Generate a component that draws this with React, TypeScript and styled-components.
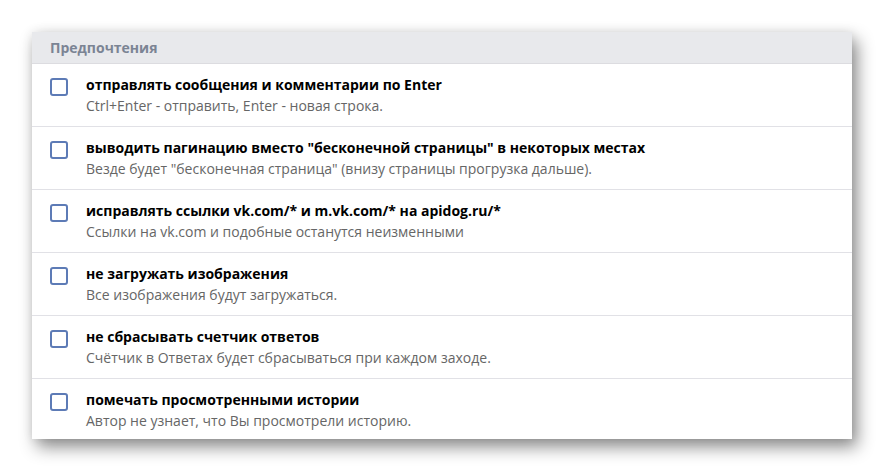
import React from "react";
import styled, { createGlobalStyle } from "styled-components";

const GlobalStyle = createGlobalStyle`
  html, body {
    margin: 0;
    padding: 0;
    background: #ffffff;
  }
  body {
    font-family: "Open Sans", "Noto Sans", sans-serif;
  }
`;

interface IOption {
  title: string;
  hint: string;
}

const options: IOption[] = [
  {
    title: "отправлять сообщения и комментарии по Enter",
    hint: "Ctrl+Enter - отправить, Enter - новая строка.",
  },
  {
    title: 'выводить пагинацию вместо "бесконечной страницы" в некоторых местах',
    hint: 'Везде будет "бесконечная страница" (внизу страницы прогрузка дальше).',
  },
  {
    title: "исправлять ссылки vk.com/* и m.vk.com/* на apidog.ru/*",
    hint: "Ссылки на vk.com и подобные останутся неизменными",
  },
  {
    title: "не загружать изображения",
    hint: "Все изображения будут загружаться.",
  },
  {
    title: "не сбрасывать счетчик ответов",
    hint: "Счётчик в Ответах будет сбрасываться при каждом заходе.",
  },
  {
    title: "помечать просмотренными истории",
    hint: "Автор не узнает, что Вы просмотрели историю.",
  },
];

function App() {
  return (
    <Page>
      <GlobalStyle />
      <Card>
        <Header>Предпочтения</Header>
        {options.map((o) => (
          <Row key={o.title}>
            <Box />
            <Texts>
              <Title>{o.title}</Title>
              <Hint>{o.hint}</Hint>
            </Texts>
          </Row>
        ))}
      </Card>
    </Page>
  );
}

export default App;

const Page = styled.div`
  padding: 32px 32px 33px 32px;
  width: 820px;
`;

const Card = styled.section`
  background: #fff;
  box-shadow: 5px 8px 16px rgba(0, 0, 0, 0.45), 0 0 10px rgba(0, 0, 0, 0.08);
`;

const Header = styled.div`
  height: 31px;
  line-height: 31px;
  padding-left: 18px;
  background: #e8e9ec;
  border-bottom: 1px solid #dcdce0;
  color: #7b8494;
  font-size: 14px;
  font-weight: 700;
`;

const Row = styled.label`
  display: flex;
  align-items: flex-start;
  gap: 18px;
  height: 63px;
  box-sizing: border-box;
  padding: 14px 18px 0 18px;
  border-bottom: 1px solid #e1e1e6;

  &:last-child {
    border-bottom: none;
    height: 60px;
  }
`;

const Box = styled.span`
  flex: none;
  width: 18px;
  height: 18px;
  box-sizing: border-box;
  border: 2px solid #5d7bb6;
  border-radius: 3px;
  background: #fff;
`;

const Texts = styled.div`
  display: flex;
  flex-direction: column;
  gap: 2px;
`;

const Title = styled.div`
  color: #000;
  font-size: 14px;
  font-weight: 700;
  line-height: 18px;
  margin-top: -2px;
`;

const Hint = styled.div`
  color: #666;
  font-size: 14px;
  line-height: 19px;
`;
